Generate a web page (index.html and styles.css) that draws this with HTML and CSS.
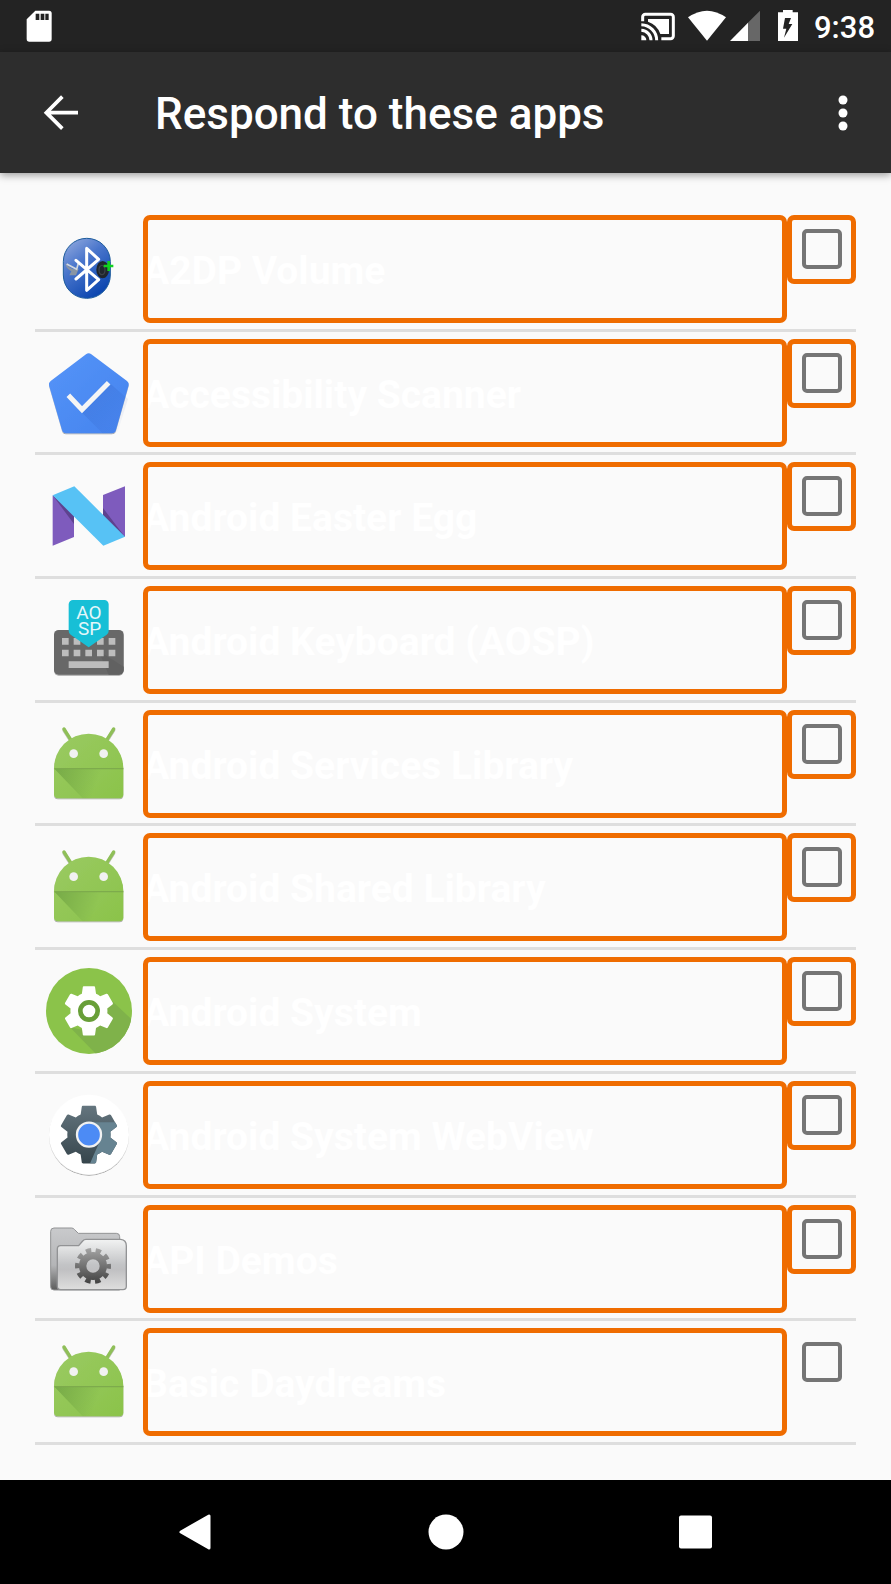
FILE: index.html
```html
<!DOCTYPE html>
<html lang="en">
<head>
<meta charset="utf-8">
<meta name="viewport" content="width=device-width, initial-scale=1">
<title>Respond to these apps</title>
<link rel="stylesheet" href="styles.css">
</head>
<body>
<svg class="defs" aria-hidden="true">
  <defs>
    <linearGradient id="droid-fill" x1="0" y1="0" x2="1" y2="1"><stop offset="0" stop-color="#9aca62"/><stop offset="1" stop-color="#8bc34a"/></linearGradient>
    <linearGradient id="droid-fold" gradientUnits="userSpaceOnUse" x1="80" y1="207" x2="200" y2="250"><stop offset="0" stop-color="#33691e" stop-opacity=".3"/><stop offset="1" stop-color="#33691e" stop-opacity="0"/></linearGradient>
    <linearGradient id="bt" x1="0" y1="0" x2=".6" y2="1"><stop offset="0" stop-color="#9bb0e0"/><stop offset=".45" stop-color="#4a76cc"/><stop offset="1" stop-color="#0d47b0"/></linearGradient>
    <linearGradient id="penta" x1="0" y1="0" x2="1" y2="1"><stop offset="0" stop-color="#5594f8"/><stop offset="1" stop-color="#4583ee"/></linearGradient>
    <linearGradient id="fade" x1="0" y1="0" x2="1" y2="1"><stop offset="0" stop-color="#1a3c9c" stop-opacity=".2"/><stop offset="1" stop-color="#1a3c9c" stop-opacity="0"/></linearGradient>
    <linearGradient id="folder-back" x1="0" y1="0" x2="0" y2="1"><stop offset="0" stop-color="#c9cacc"/><stop offset=".6" stop-color="#b4b5b7"/><stop offset="1" stop-color="#5c5c5c"/></linearGradient>
    <linearGradient id="folder-front" x1="0" y1="0" x2="0" y2="1"><stop offset="0" stop-color="#f2f3f3"/><stop offset=".5" stop-color="#c3c4c6"/><stop offset=".6" stop-color="#c0c0c2"/><stop offset="1" stop-color="#dedede"/></linearGradient>
    <linearGradient id="cog" gradientUnits="userSpaceOnUse" x1="189" y1="144" x2="189" y2="252"><stop offset="0" stop-color="#a4a4a4"/><stop offset="1" stop-color="#404040"/></linearGradient>
    <linearGradient id="slate" x1="0" y1="0" x2="0" y2="1"><stop offset="0" stop-color="#64757e"/><stop offset="1" stop-color="#36454c"/></linearGradient>
    <filter id="drop" x="-10%" y="-10%" width="120%" height="120%"><feDropShadow dx="0" dy="3" stdDeviation="2" flood-color="#000" flood-opacity=".35"/></filter>
    <path id="gear" stroke-linejoin="round" d="M19.43 12.98c.04-.32.07-.64.07-.98s-.03-.66-.07-.98l2.11-1.65c.19-.15.24-.42.12-.64l-2-3.46c-.12-.22-.39-.3-.61-.22l-2.49 1c-.52-.4-1.08-.73-1.69-.98l-.38-2.65C14.46 2.18 14.25 2 14 2h-4c-.25 0-.46.18-.49.42l-.38 2.65c-.61.25-1.17.59-1.69.98l-2.49-1c-.23-.09-.49 0-.61.22l-2 3.46c-.13.22-.07.49.12.64l2.11 1.65c-.04.32-.07.65-.07.98s.03.66.07.98l-2.11 1.65c-.19.15-.24.42-.12.64l2 3.46c.12.22.39.3.61.22l2.49-1c.52.4 1.08.73 1.69.98l.38 2.65c.03.24.24.42.49.42h4c.25 0 .46-.18.49-.42l.38-2.65c.61-.25 1.17-.59 1.69-.98l2.49 1c.23.09.49 0 .61-.22l2-3.46c.12-.22.07-.49-.12-.64z"/>
    <clipPath id="gear-clip"><use href="#gear"/></clipPath>
    <clipPath id="disc"><circle cx="177" cy="183" r="129"/></clipPath>
    <symbol id="droid" viewBox="15 30 324 324">
      <g filter="url(#drop)">
        <path d="M102 87L124 122M251 87L229 122" stroke="#8fbf58" stroke-width="10" stroke-linecap="round"/>
        <path d="M72 205a104 104 0 0 1 208 0v78a12 12 0 0 1-12 12H84a12 12 0 0 1-12-12z" fill="url(#droid-fill)"/>
      </g>
      <path d="M74 207H278V295H158z" fill="url(#droid-fold)"/>
      <path d="M73 204H280V208H73z" fill="#7dab4c"/>
      <circle cx="131" cy="161" r="13" fill="#f1f1f1"/><circle cx="221" cy="161" r="13" fill="#f1f1f1"/>
    </symbol>
  </defs>
</svg>

<div class="screen">
  <div class="status-bar">
    <svg class="sd" viewBox="78 0 78 156" aria-label="SD card"><path d="M80 58L106 32H147a8 8 0 0 1 8 8V117a8 8 0 0 1-8 8H88a8 8 0 0 1-8-8z" fill="#fff"/><path d="M107 41h11v19h-11zM122 41h11v19h-11zM136 41h10v19h-10z" fill="#232323"/></svg>
    <div class="status-icons">
      <svg class="cast" viewBox="150 0 102 156" aria-label="Cast"><path d="M155 64V51a8 8 0 0 1 8-8H239a8 8 0 0 1 8 8V108a8 8 0 0 1-8 8H211" fill="none" stroke="#fff" stroke-width="9"/><path d="M171 57H234V102H208Q199 74 171 65z" fill="#fff"/><path d="M151 74A47 47 0 0 1 197 121M151 91A30 30 0 0 1 180 121" fill="none" stroke="#fff" stroke-width="9"/><path d="M151 106A15 15 0 0 1 166 121H151z" fill="#fff"/></svg>
      <svg class="wifi" viewBox="291 0 114 156" aria-label="Wi-Fi"><path d="M291 52Q348 12 405 52L348 122z" fill="#fff"/></svg>
      <svg class="signal" viewBox="417 0 90 156" aria-label="Signal"><path d="M507 32V123H470V69z" fill="#676767"/><path d="M471 68V123H417z" fill="#fff"/></svg>
      <svg class="battery" viewBox="561 0 60 156" aria-label="Battery charging"><path d="M561 37H576V30H605V37H621V123H561z" fill="#fff"/><path d="M582 54H600L593 72H604L579 113L586 86H576z" fill="#232323"/></svg>
      <time class="clock">9:38</time>
    </div>
  </div>

  <header class="app-bar">
    <button class="icon-button back" type="button" aria-label="Back"><svg viewBox="120 276 126 126"><path d="M187 290L139 338L187 386M139 338H234" fill="none" stroke="#fff" stroke-width="11"/></svg></button>
    <h1 class="title">Respond to these apps</h1>
    <button class="icon-button" type="button" aria-label="More options"><svg viewBox="0 0 42 42"><g fill="#fff"><circle cx="21" cy="8" r="4.5"/><circle cx="21" cy="21" r="4.5"/><circle cx="21" cy="34" r="4.5"/></g></svg></button>
  </header>

  <main class="content">
    <ul class="app-list">
      <li class="app-row">
        <svg class="app-icon" viewBox="15 45 324 324" aria-hidden="true">
          <rect x="100" y="115" width="141" height="180" rx="70" fill="url(#bt)" stroke="#1d5c9c" stroke-width="3"/>
          <path d="M106 190Q125 214 146 206L138 226H118L124 214Q108 206 106 190z" fill="#8995a3"/><path d="M110 192L140 208L145 190" fill="none" stroke="#d2d8de" stroke-width="5"/>
          <path d="M138 181L206 239L170 271V145L206 178L138 237" fill="none" stroke="#fff" stroke-width="9" stroke-linejoin="round" stroke-linecap="round"/>
          <ellipse cx="218" cy="209" rx="19" ry="26" fill="#20262c"/><ellipse cx="216" cy="210" rx="9" ry="14" fill="none" stroke="#3b4249" stroke-width="4"/>
          <path d="M236 183V213M221 198H250" stroke="#12d21f" stroke-width="8"/>
        </svg>
        <label class="app-name" for="app-1">A2DP Volume</label>
        <span class="check framed"><input type="checkbox" id="app-1"></span>
      </li>
      <li class="app-row">
        <svg class="app-icon" viewBox="15 414 324 324" aria-hidden="true">
          <path d="M168 460Q176 454 184 460L291 540Q298 545 296 553L258 687Q255 697 245 697H108Q99 697 96 687L57 553Q55 545 62 540z" fill="url(#penta)" filter="url(#drop)"/>
          <path d="M157 636L242 549L294 594L264 690Q258 697 245 697H218z" fill="url(#fade)"/>
          <path d="M115 583L156 626L236 545" fill="none" stroke="#f5f5f5" stroke-width="15"/>
        </svg>
        <label class="app-name" for="app-2">Accessibility Scanner</label>
        <span class="check framed"><input type="checkbox" id="app-2"></span>
      </li>
      <li class="app-row">
        <svg class="app-icon" viewBox="15 36 324 324" aria-hidden="true">
          <path d="M68 136L132 190V261L68 287zM285 109V261L219 200V135z" fill="#7e5bbd"/>
          <path d="M68 136L132 190V222zM219 174L285 261L219 212z" fill="#5e428f"/>
          <path d="M68 136L133 109L285 260L220 287z" fill="#57c2f5"/>
        </svg>
        <label class="app-name" for="app-3">Android Easter Egg</label>
        <span class="check framed"><input type="checkbox" id="app-3"></span>
      </li>
      <li class="app-row">
        <svg class="app-icon" viewBox="15 408 324 324" aria-hidden="true">
          <rect x="72" y="540" width="209" height="134" rx="14" fill="#676767" filter="url(#drop)"/>
          <path d="M206 603L281 650V660a14 14 0 0 1-14 14H236z" fill="#616161"/>
          <path d="M96 564h20v20H96zM131 564h20v20h-20zM201 564h20v20h-20zM236 564h20v20h-20zM96 599h20v20H96zM131 599h20v20h-20zM166 599h20v20h-20zM201 599h20v20h-20zM236 599h20v20h-20zM116 634h120v20H116z" fill="#bdbdbd"/>
          <path d="M116 463a13 13 0 0 1 13-13H223a13 13 0 0 1 13 13V543Q236 550 230 554L176 592L122 554Q116 550 116 543z" fill="#17bfd6"/>
          <text class="key-text" text-anchor="middle"><tspan x="177" y="507">AO</tspan><tspan x="179" y="555">SP</tspan></text>
        </svg>
        <label class="app-name" for="app-4">Android Keyboard (AOSP)</label>
        <span class="check framed"><input type="checkbox" id="app-4"></span>
      </li>
      <li class="app-row">
        <svg class="app-icon" aria-hidden="true"><use href="#droid"/></svg>
        <label class="app-name" for="app-5">Android Services Library</label>
        <span class="check framed"><input type="checkbox" id="app-5"></span>
      </li>
      <li class="app-row">
        <svg class="app-icon" aria-hidden="true"><use href="#droid"/></svg>
        <label class="app-name" for="app-6">Android Shared Library</label>
        <span class="check framed"><input type="checkbox" id="app-6"></span>
      </li>
      <li class="app-row">
        <svg class="app-icon" viewBox="15 21 324 324" aria-hidden="true">
          <circle cx="177" cy="183" r="129" fill="#8bc34a"/>
          <path d="M243 150L339 240V345H230L120 232L160 240z" fill="#7fb24a" clip-path="url(#disc)"/>
          <use href="#gear" transform="translate(88 94) scale(7.4)" fill="#fff"/>
          <circle cx="177" cy="183" r="26" fill="#fff" stroke="#689f38" stroke-width="14"/>
        </svg>
        <label class="app-name" for="app-7">Android System</label>
        <span class="check framed"><input type="checkbox" id="app-7"></span>
      </li>
      <li class="app-row">
        <svg class="app-icon" viewBox="15 393 324 324" aria-hidden="true">
          <circle cx="177" cy="554" r="120" fill="#fff" filter="url(#drop)"/>
          <g transform="translate(73 450) scale(8.65)">
            <use href="#gear" fill="url(#slate)"/>
            <path d="M12 7.700H24V24H11.500L15.900 14z" fill="#668391" clip-path="url(#gear-clip)"/>
          </g>
          <circle cx="177" cy="554" r="36" fill="#4c8bf5" stroke="#f1f1f1" stroke-width="7"/>
        </svg>
        <label class="app-name" for="app-8">Android System WebView</label>
        <span class="check framed"><input type="checkbox" id="app-8"></span>
      </li>
      <li class="app-row">
        <svg class="app-icon" viewBox="15 15 324 324" aria-hidden="true">
          <path d="M62 94a10 10 0 0 1 10-10H125Q130 84 134 89L145 100H259a10 10 0 0 1 10 10V270H72a10 10 0 0 1-10-10z" fill="url(#folder-back)" stroke="#929395" stroke-width="3"/>
          <path d="M82 147a10 10 0 0 1 10-10H146L158 123Q162 118 168 118H272Q289 120 289 137V259a10 10 0 0 1-10 10H92a10 10 0 0 1-10-10z" fill="url(#folder-front)" stroke="#929395" stroke-width="4"/>
          <circle cx="189" cy="198" r="31" fill="none" stroke="url(#cog)" stroke-width="22"/>
          <circle cx="189" cy="198" r="47" fill="none" stroke="url(#cog)" stroke-width="14" stroke-dasharray="16 13.530" stroke-dashoffset="8"/>
        </svg>
        <label class="app-name" for="app-9">API Demos</label>
        <span class="check framed"><input type="checkbox" id="app-9"></span>
      </li>
      <li class="app-row">
        <svg class="app-icon" aria-hidden="true"><use href="#droid"/></svg>
        <label class="app-name" for="app-10">Basic Daydreams</label>
        <span class="check"><input type="checkbox" id="app-10"></span>
      </li>
    </ul>
  </main>

  <nav class="nav-bar" aria-label="System">
    <button class="nav-button" type="button" aria-label="Back"><svg viewBox="0 0 36 36"><path d="M3 18L31 2V34z" fill="#fff" stroke="#fff" stroke-width="3" stroke-linejoin="round"/></svg></button>
    <button class="nav-button" type="button" aria-label="Home"><svg viewBox="0 0 36 36"><circle cx="18" cy="18" r="17.500" fill="#fff"/></svg></button>
    <button class="nav-button" type="button" aria-label="Recent apps"><svg viewBox="0 0 36 36"><rect x="2" y="1.500" width="33" height="33" rx="2" fill="#fff"/></svg></button>
  </nav>
</div>
</body>
</html>
```
FILE: styles.css
```css
* {
  box-sizing: border-box;
}

body {
  margin: 0;
  background: #fafafa;
  font-family: Roboto, "Noto Sans", sans-serif;
}

svg {
  display: block;
}

.defs {
  position: absolute;
  width: 0;
  height: 0;
}

button {
  border: 0;
  padding: 0;
  background: none;
}

.screen {
  display: flex;
  flex-direction: column;
  min-height: 100vh;
}

.status-bar {
  display: flex;
  justify-content: space-between;
  align-items: center;
  height: 52px;
  padding: 0 17px 0 26px;
  background: #232323;
  color: #fff;
}

.status-bar svg {
  height: 52px;
}

.status-icons {
  display: flex;
  align-items: center;
}

.sd {
  width: 26px;
}

.cast {
  width: 34px;
  margin-right: 13px;
}

.wifi {
  width: 38px;
  margin-right: 4px;
}

.signal {
  width: 30px;
  margin-right: 18px;
}

.battery {
  width: 20px;
  margin-right: 16px;
}

.clock {
  font-size: 31px;
  font-weight: 500;
  line-height: 56px;
}

.status-icons .clock {
  height: 52px;
  margin-right: -1px;
}

.app-bar {
  position: relative;
  display: flex;
  align-items: center;
  height: 121px;
  padding: 0 27px 0 40px;
  background: #2d2d2d;
  color: #fff;
  box-shadow: 0 2px 8px rgba(0, 0, 0, 0.4);
}

.icon-button svg {
  width: 42px;
  height: 42px;
}

.back {
  margin-right: 73px;
}

.title {
  flex: 1;
  margin: 0;
  padding-top: 2px;
  font-size: 44px;
  font-weight: 500;
  line-height: 56px;
}

.content {
  display: flex;
  flex: 1;
  padding: 35px 35px 35px;
}

.app-list {
  display: grid;
  flex: 1;
  grid-auto-rows: 1fr;
  margin: 0;
  padding: 0;
  list-style: none;
}

.app-row {
  display: flex;
  align-items: flex-start;
  padding-top: 7px;
  border-bottom: 3px solid #dedede;
}

.app-icon {
  flex: none;
  width: 108px;
  height: 108px;
}

.key-text {
  fill: #e4f7fa;
  font-family: Roboto, sans-serif;
  font-size: 57px;
}

.app-name {
  position: relative;
  flex: 1;
  height: 108px;
  padding-top: 2px;
  color: #fff;
  font-size: 39px;
  font-weight: 700;
  line-height: 108px;
}

.app-name::after,
.framed::after {
  content: "";
  position: absolute;
  inset: 0;
  border: 5px solid #ef6c00;
  border-radius: 7px;
  pointer-events: none;
}

.check {
  position: relative;
  display: grid;
  flex: none;
  width: 69px;
  height: 69px;
  padding: 14px 15px;
}

.check input {
  appearance: none;
  width: 40px;
  height: 40px;
  margin: 0;
  border: 4px solid #757575;
  border-radius: 5px;
}

.check input:checked {
  background: #757575;
}

.nav-bar {
  display: flex;
  justify-content: center;
  height: 104px;
  background: #000;
}

.nav-button {
  display: grid;
  place-items: center;
  width: 28%;
}

.nav-button svg {
  width: 36px;
  height: 36px;
}
```
